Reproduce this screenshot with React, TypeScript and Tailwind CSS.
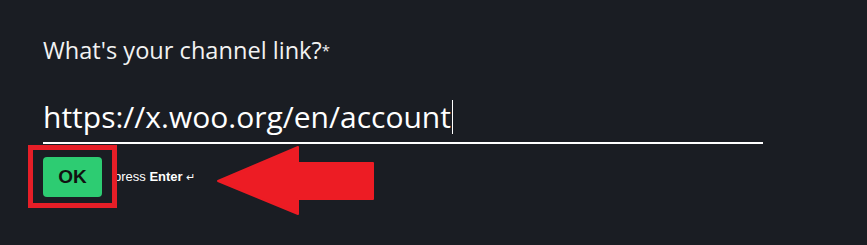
import React from 'react';

export default function App() {
  return (
    <div className="relative w-[867px] h-[245px] bg-[#1a1d23] overflow-hidden font-['Open_Sans',sans-serif]">
      <div className="flex flex-col pl-[43px] pt-[35px]">
        {/* Question */}
        <p className="text-[23.6px] leading-[30px] text-[#f2f2f2]">
          What's your channel link?<span className="text-[15px] align-top">*</span>
        </p>

        {/* Answer input */}
        <div className="mt-[32px] w-[720px] border-b-2 border-white pb-[5px] flex items-center">
          <span className="text-[30px] leading-[40px] text-white">https://x.woo.org/en/account</span>
          <span className="ml-[1px] w-px h-[34px] bg-white" />
        </div>

        {/* OK row */}
        <div className="mt-[13px] flex items-center gap-[12px]">
          <button className="w-[59px] h-[40px] rounded-[4px] bg-[#2dcc72] text-[#111] text-[19px] font-bold font-['Liberation_Sans',Arial,sans-serif]">
            OK
          </button>
          <span className="text-[13px] text-white font-['Liberation_Sans',Arial,sans-serif]">
            press <span className="font-bold">Enter</span> <span className="text-[11px]">↵</span>
          </span>
        </div>
      </div>

      {/* Annotation: red box around OK */}
      <div className="absolute left-[28px] top-[145px] w-[89px] h-[63px] border-[5px] border-[#e61e27]" />

      {/* Annotation: arrow */}
      <svg className="absolute left-0 top-0" width="867" height="245" viewBox="0 0 867 245">
        <path
          d="M218 181 L298 147 L298 163 L373 163 L373 199 L298 199 L298 214 Z"
          fill="#ed1c24"
          stroke="#ed1c24"
          strokeWidth="2"
          strokeLinejoin="round"
        />
      </svg>
    </div>
  );
}
